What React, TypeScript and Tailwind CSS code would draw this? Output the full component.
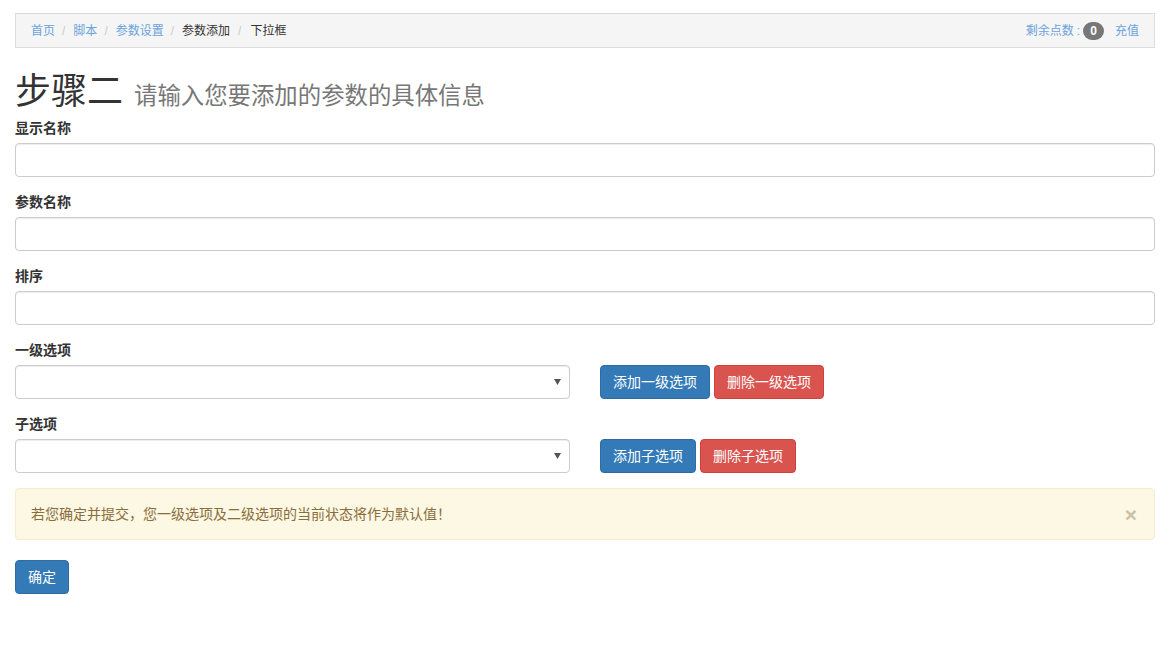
import React from "react";

const font = { fontFamily: '"Liberation Sans", "Noto Sans CJK SC", sans-serif' };

function Field({ label }: { label: string }) {
  return (
    <div className="mb-[15px]">
      <label className="block text-[14px] leading-[20px] font-bold text-[#333] mb-[5px]">{label}</label>
      <input className="block w-full h-[34px] border border-[#ccc] rounded-[4px] bg-white px-3 shadow-[inset_0_1px_1px_rgba(0,0,0,0.075)] outline-none" />
    </div>
  );
}

function SelectRow({ label, add, del, addW, delW }: { label: string; add: string; del: string; addW: string; delW: string }) {
  return (
    <div className="mb-[15px]">
      <label className="block text-[14px] leading-[20px] font-bold text-[#333] mb-[5px]">{label}</label>
      <div className="flex items-center">
        <div className="relative w-[555px] h-[34px]">
          <select className="appearance-none w-full h-[34px] border border-[#ccc] rounded-[4px] bg-white px-3 shadow-[inset_0_1px_1px_rgba(0,0,0,0.075)] outline-none"></select>
          <svg className="absolute right-[9px] top-[14px]" width="7" height="6" viewBox="0 0 7 6">
            <polygon points="0,0 7,0 3.5,6" fill="#555" />
          </svg>
        </div>
        <div className="flex gap-[4px] ml-[30px]">
          <button className={`${addW} h-[34px] rounded-[4px] bg-[#337ab7] border border-[#2e6da4] text-white text-[14px]`}>{add}</button>
          <button className={`${delW} h-[34px] rounded-[4px] bg-[#d9534f] border border-[#d43f3a] text-white text-[14px]`}>{del}</button>
        </div>
      </div>
    </div>
  );
}

export default function App() {
  return (
    <div style={font} className="bg-white w-[1174px] h-[660px] pl-[15px] pr-[19px] pt-[13px] text-[#333]">
      <div className="flex items-center justify-between h-[35px] px-[15px] bg-[#f5f5f5] border border-[#ddd] text-[12px] leading-[17px]">
        <div className="flex items-center pt-[1px]">
          <span className="text-[#6ba3dc]">首页</span>
          <span className="text-[#ccc] pl-[7px] pr-[8px]">/</span>
          <span className="text-[#6ba3dc]">脚本</span>
          <span className="text-[#ccc] pl-[7px] pr-[8px]">/</span>
          <span className="text-[#6ba3dc]">参数设置</span>
          <span className="text-[#ccc] pl-[7px] pr-[8px]">/</span>
          <span className="text-[#333]">参数添加</span>
          <span className="text-[#ccc] pl-[8px] pr-[9px]">/</span>
          <span className="text-[#333]">下拉框</span>
        </div>
        <div className="flex items-center pt-[1px]">
          <span className="text-[#6ba3dc]">剩余点数</span>
          <span className="text-[#6ba3dc] px-[3px]">:</span>
          <span className="inline-flex items-center justify-center h-[18px] min-w-[21px] px-[6px] rounded-[10px] bg-[#777] text-white text-[12px] font-bold">0</span>
          <span className="text-[#6ba3dc] ml-[11px]">充值</span>
        </div>
      </div>

      <h1 className="mt-[26px] mb-[4px] flex items-baseline leading-[36px]">
        <span className="text-[36px] text-[#333]">步骤二</span>
        <span className="text-[23.4px] text-[#777] ml-[11px]">请输入您要添加的参数的具体信息</span>
      </h1>

      <Field label="显示名称" />
      <Field label="参数名称" />
      <Field label="排序" />
      <SelectRow label="一级选项" add="添加一级选项" del="删除一级选项" addW="w-[110px]" delW="w-[110px]" />
      <SelectRow label="子选项" add="添加子选项" del="删除子选项" addW="w-[96px]" delW="w-[96px]" />

      <div className="flex items-center justify-between h-[52px] mt-[1px] px-[15px] bg-[#fcf8e3] border border-[#faebcc] rounded-[4px] text-[#8a6d3b] text-[14px]">
        <span>若您确定并提交，您一级选项及二级选项的当前状态将作为默认值！</span>
        <span className="text-[#c9c2a8] text-[21px] font-bold leading-none mr-[2px]">×</span>
      </div>

      <button className="mt-[20px] w-[54px] h-[34px] rounded-[4px] bg-[#337ab7] border border-[#2e6da4] text-white text-[14px]">确定</button>
    </div>
  );
}
